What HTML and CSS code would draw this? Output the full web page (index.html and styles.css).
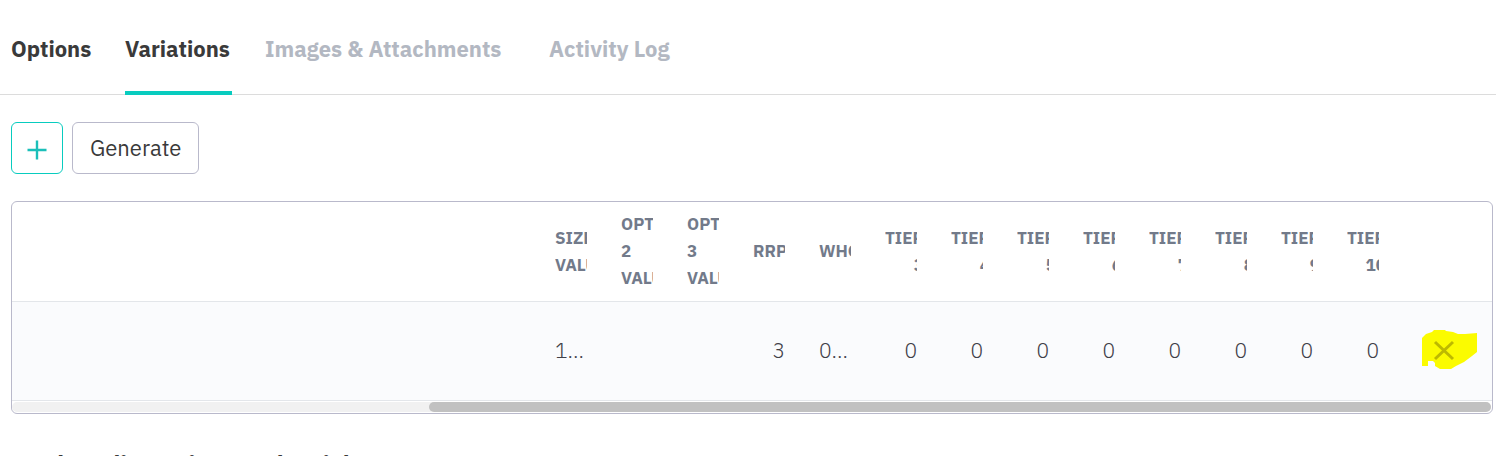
FILE: index.html
```html
<!DOCTYPE html>
<html lang="en">
<head>
    <meta charset="UTF-8">
    <meta name="viewport" content="width=device-width, initial-scale=1.0">
    <title>Product - Variations</title>
    <link rel="stylesheet" href="styles.css">
</head>
<body>
    <!-- Tabs -->
    <nav class="tabs">
        <a class="tab" href="#options">Options</a>
        <a class="tab active" href="#variations">Variations</a>
        <a class="tab disabled" href="#images">Images &amp; Attachments</a>
        <a class="tab disabled" href="#activity">Activity Log</a>
    </nav>

    <main class="content">
        <!-- Toolbar -->
        <div class="toolbar">
            <button class="btn btn-add" type="button" aria-label="Add variation">
                <svg width="20" height="20" viewBox="0 0 20 20"><path d="M10 0.500V19.500M0.500 10H19.500" fill="none" stroke="currentColor" stroke-width="2.400"/></svg>
            </button>
            <button class="btn" type="button">Generate</button>
        </div>

        <!-- Variations grid -->
        <div class="grid">
            <table class="variations">
                <thead>
                    <tr>
                        <th class="spacer"></th>
                        <th><div class="label">SIZE VALUE</div></th>
                        <th><div class="label">OPTION 2 VALUE</div></th>
                        <th><div class="label">OPTION 3 VALUE</div></th>
                        <th><div class="label">RRP</div></th>
                        <th><div class="label">WHOLESALE</div></th>
                        <th><div class="label"><span class="tier">TIER 3</span></div></th>
                        <th><div class="label"><span class="tier">TIER 4</span></div></th>
                        <th><div class="label"><span class="tier">TIER 5</span></div></th>
                        <th><div class="label"><span class="tier">TIER 6</span></div></th>
                        <th><div class="label"><span class="tier">TIER 7</span></div></th>
                        <th><div class="label"><span class="tier">TIER 8</span></div></th>
                        <th><div class="label"><span class="tier">TIER 9</span></div></th>
                        <th><div class="label"><span class="tier">TIER 10</span></div></th>
                        <th class="actions"></th>
                    </tr>
                </thead>
                <tbody>
                    <tr>
                        <td class="spacer"></td>
                        <td>1...</td>
                        <td></td>
                        <td></td>
                        <td class="number">3</td>
                        <td>0...</td>
                        <td class="number">0</td>
                        <td class="number">0</td>
                        <td class="number">0</td>
                        <td class="number">0</td>
                        <td class="number">0</td>
                        <td class="number">0</td>
                        <td class="number">0</td>
                        <td class="number">0</td>
                        <td class="actions">
                            <button class="btn-delete" type="button" aria-label="Delete variation">
                                <svg width="56" height="40" viewBox="0 0 56 40">
                                    <path class="marker" d="M0 8L4 4L10 2L12 0H23L24 1L31 2L36 4H43L55 3V22L50 26L42 32L34 36L29 39H18L13 36V33L11 31H6V36H0Z"/>
                                    <path class="cross" d="M13 12L31 29M31 12L13 29"/>
                                </svg>
                            </button>
                        </td>
                    </tr>
                </tbody>
            </table>
            <div class="scroll-track"><div class="scroll-thumb"></div></div>
        </div>

        <h2 class="section-title">Product dimensions and weight</h2>
    </main>
</body>
</html>
```
FILE: styles.css
```css
* {
    box-sizing: border-box;
    margin: 0;
    padding: 0;
}

body {
    height: 100vh;
    overflow: hidden;
    font-family: "IBM Plex Sans", Roboto, sans-serif;
    font-size: 22px;
    background-color: #fff;
    color: #3a3a3a;
}

/* Tabs */
.tabs {
    display: grid;
    grid-template-columns: 81px 107px 251px auto;
    justify-content: start;
    column-gap: 33px;
    padding-left: 11px;
    border-bottom: 1px solid #dcdcdc;
}

.tab {
    height: 95px;
    margin-bottom: -1px;
    padding-top: 33px;
    line-height: 32px;
    font-weight: 700;
    white-space: nowrap;
    color: #3a3a3a;
    text-decoration: none;
}

.tab.active {
    border-bottom: 4px solid #08ccbf;
}

.tab.disabled {
    color: #b3b8c2;
}

/* Toolbar */
.content {
    padding: 27px 3px 0 11px;
}

.toolbar {
    display: flex;
    gap: 9px;
    margin-bottom: 27px;
}

.btn {
    height: 52px;
    padding: 0 17px 2px;
    border: 1px solid #b9b9cb;
    border-radius: 6px;
    background-color: #fff;
    color: #3a3a3a;
    font-family: inherit;
    font-size: 22px;
    cursor: pointer;
}

.btn-add {
    display: flex;
    align-items: center;
    justify-content: center;
    width: 52px;
    padding: 3px 0 0;
    border-color: #08ccbf;
    color: #1bbfb9;
}

/* Grid */
.grid {
    border: 1px solid #b9b9cb;
    border-radius: 6px;
    overflow: hidden;
}

.variations {
    width: 100%;
    table-layout: fixed;
    border-collapse: separate;
    border-spacing: 0;
}

.variations th,
.variations td {
    width: 66px;
    padding: 0 17px;
    border-bottom: 1px solid #e3e6ea;
    text-align: left;
    vertical-align: middle;
}

.variations th {
    height: 100px;
    font-size: 17px;
    line-height: 27px;
    font-weight: 700;
    color: #727a8a;
}

.variations td {
    height: 99px;
    padding-bottom: 2px;
    background-color: #fafbfd;
    font-size: 21px;
    font-weight: 300;
    color: #3f4048;
    white-space: nowrap;
}

.variations .spacer {
    width: auto;
}

.variations .number {
    text-align: right;
}

.variations .actions {
    width: 96px;
    padding: 0 0 2px 26px;
}

.label {
    overflow: hidden;
}

.tier {
    display: block;
    width: min-content;
    text-align: right;
}

.btn-delete {
    display: block;
    border: none;
    background: none;
    cursor: pointer;
}

.btn-delete svg {
    display: block;
}

.marker {
    fill: #fbfb00;
}

.cross {
    fill: none;
    stroke: #bdb900;
    stroke-width: 3;
}

/* Horizontal scrollbar */
.scroll-track {
    height: 10px;
    margin: 1px 1px 1px 0;
    border-radius: 5px;
    background-color: #f1f1f1;
}

.scroll-thumb {
    width: 71.8%;
    height: 100%;
    margin-left: auto;
    border-radius: 5px;
    background-color: #c1c1c1;
}

.section-title {
    margin-top: 34px;
    font-size: 24px;
    line-height: 32px;
    font-weight: 700;
}
```
